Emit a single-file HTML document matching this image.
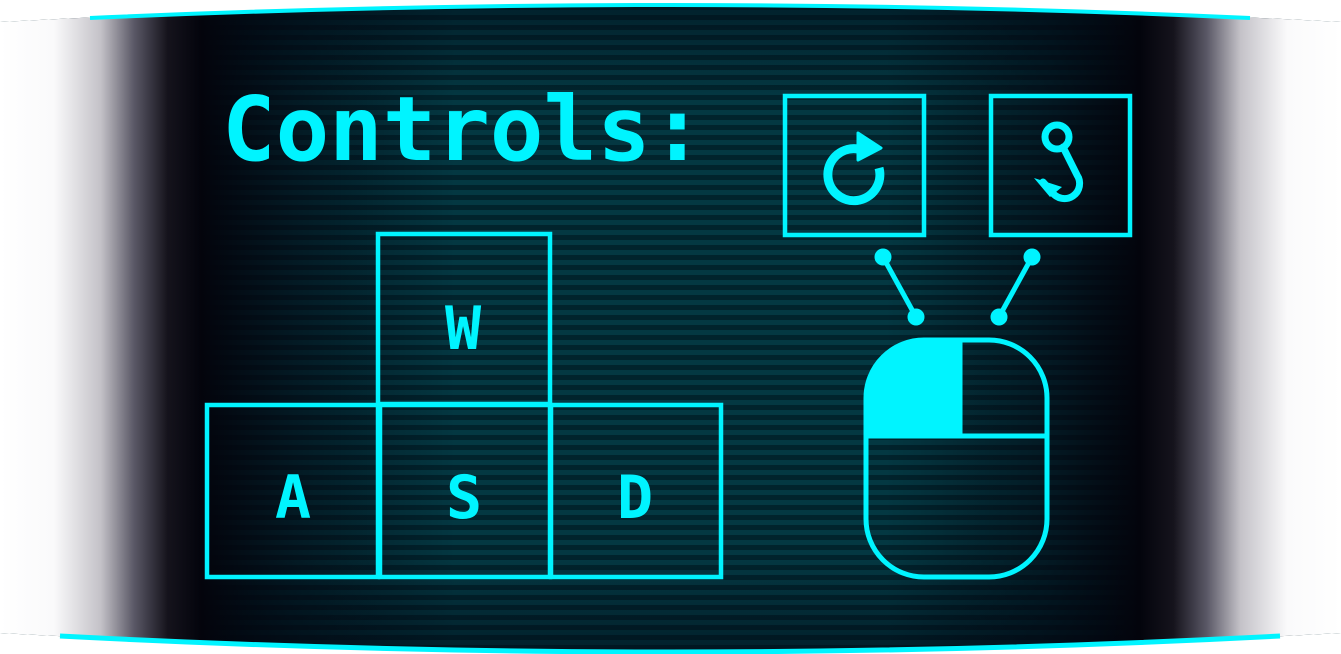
<!DOCTYPE html>
<html><head><meta charset="utf-8"><style>
html,body{margin:0;padding:0;background:#fff;width:1341px;height:654px;overflow:hidden}
svg{display:block}
</style></head><body>
<svg width="1341" height="654" viewBox="0 0 1341 654" xmlns="http://www.w3.org/2000/svg">
<defs>
<pattern id="st" width="10" height="10" patternUnits="userSpaceOnUse">
<rect width="10" height="10" fill="#043842"/><rect y="5" width="10" height="5" fill="#01232c"/>
</pattern>
<linearGradient id="fade" x1="0" x2="1" y1="0" y2="0">
<stop offset="0" stop-color="#fff" stop-opacity="1"/>
<stop offset="0.04" stop-color="#fafafb" stop-opacity="1"/>
<stop offset="0.075" stop-color="#c4c2c8" stop-opacity="1"/>
<stop offset="0.1" stop-color="#5a5866" stop-opacity="1"/>
<stop offset="0.125" stop-color="#15131c" stop-opacity="1"/>
<stop offset="0.15" stop-color="#03040c" stop-opacity="1"/>
<stop offset="0.22" stop-color="#020610" stop-opacity="0.6"/>
<stop offset="0.34" stop-color="#020610" stop-opacity="0"/>
<stop offset="0.66" stop-color="#020610" stop-opacity="0"/>
<stop offset="0.78" stop-color="#020610" stop-opacity="0.6"/>
<stop offset="0.85" stop-color="#03040c" stop-opacity="1"/>
<stop offset="0.875" stop-color="#15131c" stop-opacity="1"/>
<stop offset="0.9" stop-color="#5a5866" stop-opacity="1"/>
<stop offset="0.925" stop-color="#c4c2c8" stop-opacity="1"/>
<stop offset="0.96" stop-color="#fafafb" stop-opacity="1"/>
<stop offset="1" stop-color="#fff" stop-opacity="1"/>
</linearGradient>
<linearGradient id="vf" x1="0" x2="0" y1="0" y2="1">
<stop offset="0" stop-color="#000814" stop-opacity="0.5"/>
<stop offset="0.15" stop-color="#000814" stop-opacity="0"/>
<stop offset="0.85" stop-color="#000814" stop-opacity="0"/>
<stop offset="1" stop-color="#000814" stop-opacity="0.5"/>
</linearGradient>
<clipPath id="cp"><path d="M0 22 Q670 -14 1341 22 L1341 633 Q670 670 0 633 Z"/></clipPath>
</defs>
<g clip-path="url(#cp)">
<rect width="1341" height="654" fill="url(#st)"/>
<rect width="1341" height="654" fill="url(#vf)"/>
<rect width="1341" height="654" fill="url(#fade)"/>
</g>
<path d="M90 18 Q670 -8 1250 18" stroke="#00f4ff" stroke-width="4" fill="none"/>
<path d="M60 636 Q670 668 1280 636" stroke="#00f4ff" stroke-width="5" fill="none"/>
<g fill="none" stroke="#00f4ff" stroke-width="4.5">
<rect x="378" y="234" width="172" height="170"/>
<rect x="207" y="405" width="171" height="172"/>
<rect x="380" y="405" width="170" height="172"/>
<rect x="551" y="405" width="170" height="172"/>
<rect x="785" y="96" width="139" height="139"/>
<rect x="991" y="96" width="139" height="139"/>
</g>
<text x="222" y="160" font-family="DejaVu Sans Mono, Liberation Mono, monospace" font-weight="bold" font-size="89" fill="#00f4ff">Controls:</text>
<g font-family="DejaVu Sans Mono, Liberation Mono, monospace" font-weight="bold" font-size="60" fill="#00f4ff" text-anchor="middle">
<text x="463" y="349">W</text>
<text x="293" y="518">A</text>
<text x="464" y="518">S</text>
<text x="635" y="518">D</text>
</g>
<path d="M879 168 A26 26 0 1 1 858 149" fill="none" stroke="#00f4ff" stroke-width="9"/>
<path d="M858 133 L881 148 L858 160 Z" fill="#00f4ff" stroke="#00f4ff" stroke-width="3" stroke-linejoin="round"/>
<circle cx="1057" cy="137" r="12" fill="none" stroke="#00f4ff" stroke-width="7"/>
<path d="M1063 147 L1077 175 A14 14 0 0 1 1052 192 L1043 182" fill="none" stroke="#00f4ff" stroke-width="7" stroke-linecap="round"/>
<path d="M1034 178 L1062 187 L1050 197 Z" fill="#00f4ff"/>
<g stroke="#00f4ff" fill="#00f4ff">
<line x1="883" y1="257" x2="916" y2="317" stroke-width="5"/>
<line x1="1032" y1="257" x2="999" y2="317" stroke-width="5"/>
<circle cx="883" cy="257" r="8"/><circle cx="916" cy="317" r="8"/>
<circle cx="1032" cy="257" r="8"/><circle cx="999" cy="317" r="8"/>
</g>
<path d="M866 436 L866 400 A60 60 0 0 1 926 340 L960 340 L960 436 Z" fill="#00f4ff"/>
<rect x="866" y="340" width="181" height="237" rx="58" fill="none" stroke="#00f4ff" stroke-width="5"/>
<line x1="866" y1="436" x2="1047" y2="436" stroke="#00f4ff" stroke-width="5"/>
<line x1="960" y1="340" x2="960" y2="436" stroke="#00f4ff" stroke-width="5"/>
</svg>
</body></html>
